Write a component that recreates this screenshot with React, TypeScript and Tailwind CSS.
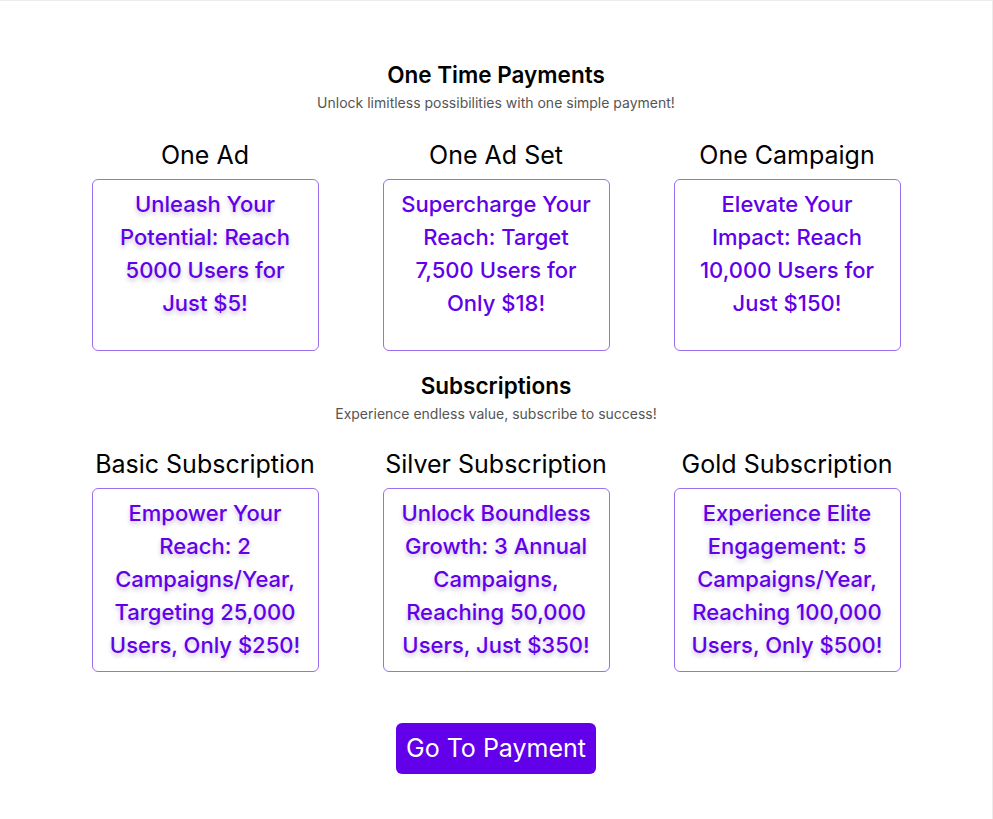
import React from "react"

type Plan = {
  title: string
  text: string
  glow: boolean
}

const oneTime: Plan[] = [
  { title: "One Ad", text: "Unleash Your Potential: Reach 5000 Users for Just $5!", glow: true },
  { title: "One Ad Set", text: "Supercharge Your Reach: Target 7,500 Users for Only $18!", glow: false },
  { title: "One Campaign", text: "Elevate Your Impact: Reach 10,000 Users for Just $150!", glow: false },
]

const subscriptions: Plan[] = [
  {
    title: "Basic Subscription",
    text: "Empower Your Reach: 2 Campaigns/Year, Targeting 25,000 Users, Only $250!",
    glow: true,
  },
  {
    title: "Silver Subscription",
    text: "Unlock Boundless Growth: 3 Annual Campaigns, Reaching 50,000 Users, Just $350!",
    glow: true,
  },
  {
    title: "Gold Subscription",
    text: "Experience Elite Engagement: 5 Campaigns/Year, Reaching 100,000 Users, Only $500!",
    glow: true,
  },
]

function PlanCard({ plan, tall }: { plan: Plan; tall?: boolean }) {
  return (
    <div className="flex flex-col items-center">
      <h3 className="text-[25px] leading-8 text-black whitespace-nowrap">{plan.title}</h3>
      <div
        className={`mt-2 w-[227px] rounded-md border border-[#9c6ef0] px-2 pt-2 pb-[9px] ${
          tall ? "h-[172px]" : ""
        }`}
      >
        <p
          className={`text-center text-[22px] leading-[33px] font-medium text-[#6200ea] ${
            plan.glow ? "[text-shadow:0_3px_4px_rgba(60,20,120,0.25)]" : ""
          }`}
        >
          {plan.text}
        </p>
      </div>
    </div>
  )
}

function Section({
  title,
  subtitle,
  plans,
  tall,
  gridGap,
}: {
  title: string
  subtitle: string
  plans: Plan[]
  tall?: boolean
  gridGap: string
}) {
  return (
    <section className="flex flex-col items-center">
      <h2 className="text-[22.5px] leading-7 font-semibold text-black">{title}</h2>
      <p className="mt-1 text-sm leading-5 text-[#555]">{subtitle}</p>
      <div className={`${gridGap} grid grid-cols-3 gap-x-16`}>
        {plans.map((plan) => (
          <PlanCard key={plan.title} plan={plan} tall={tall} />
        ))}
      </div>
    </section>
  )
}

export default function App() {
  return (
    <div
      className="h-screen overflow-hidden bg-white border-t border-r border-[#ececec] flex flex-col items-center pt-[60px]"
      style={{ fontFamily: "Inter, 'Noto Sans', sans-serif" }}
    >
      <Section
        title="One Time Payments"
        subtitle="Unlock limitless possibilities with one simple payment!"
        plans={oneTime}
        tall
        gridGap="mt-[26px]"
      />
      <div className="mt-[21px]">
        <Section
          title="Subscriptions"
          subtitle="Experience endless value, subscribe to success!"
          plans={subscriptions}
          gridGap="mt-[24px]"
        />
      </div>
      <button className="mt-[51px] w-[200px] h-[51px] rounded-md bg-[#6200ea] text-white text-[25px]">
        Go To Payment
      </button>
    </div>
  )
}
